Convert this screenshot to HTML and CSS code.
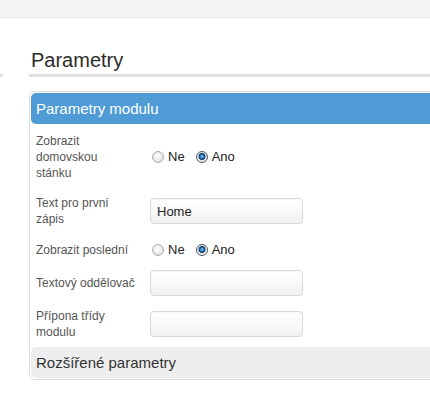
FILE: index.html
```html
<!DOCTYPE html>
<html lang="cs">
<head>
<meta charset="utf-8">
<title>Parametry</title>
<link rel="stylesheet" href="styles.css">
</head>
<body>
<div class="topbar"></div>
<div class="layout">
  <div class="side"><div class="side-rule"></div></div>
  <div class="content">
    <h2 class="heading">Parametry</h2>
    <div class="panel">
      <div class="panel-head">Parametry modulu</div>
      <div class="fields">
        <div class="row row-a">
          <div class="label">Zobrazit<br>domovskou<br>stánku</div>
          <div class="radios">
            <label class="opt"><input class="radio" type="radio" name="home">Ne</label>
            <label class="opt"><input class="radio" type="radio" name="home" checked>Ano</label>
          </div>
        </div>
        <div class="row row-b">
          <div class="label">Text pro první<br>zápis</div>
          <input class="text" type="text" value="Home">
        </div>
        <div class="row">
          <div class="label">Zobrazit poslední</div>
          <div class="radios">
            <label class="opt"><input class="radio" type="radio" name="last">Ne</label>
            <label class="opt"><input class="radio" type="radio" name="last" checked>Ano</label>
          </div>
        </div>
        <div class="row">
          <div class="label">Textový oddělovač</div>
          <input class="text" type="text" value="">
        </div>
        <div class="row">
          <div class="label">Přípona třídy<br>modulu</div>
          <input class="text" type="text" value="">
        </div>
      </div>
      <div class="panel-foot">Rozšířené parametry</div>
    </div>
  </div>
</div>
</body>
</html>
```
FILE: styles.css
```css
html, body {
  margin: 0;
  padding: 0;
}
body {
  width: 430px;
  height: 398px;
  overflow: hidden;
  background: #fff;
  font-family: "Liberation Sans", Arial, sans-serif;
  color: #333;
}
.topbar {
  height: 17px;
  background: #f4f4f4;
  border-bottom: 1px solid #e8e8e8;
}
.layout {
  display: flex;
  gap: 26px;
  padding-top: 30px;
}
.side {
  width: 3px;
  flex: none;
}
.side-rule {
  height: 26px;
  border-bottom: 3px solid #e2e2e2;
}
.content {
  flex: none;
  width: 430px;
}
.heading {
  margin: 0;
  padding: 0 0 2px 2px;
  font-size: 20px;
  line-height: 24px;
  font-weight: normal;
  color: #2b2b2b;
  border-bottom: 3px solid #e0e0e0;
}
.panel {
  margin-top: 14px;
  border: 1px solid #dedede;
  border-radius: 5px;
  padding: 1px;
}
.panel-head {
  height: 31px;
  line-height: 31px;
  padding-left: 5px;
  border-radius: 5px;
  background: #4e9bd6;
  color: #fff;
  font-size: 15px;
}
.fields {
  display: flex;
  flex-direction: column;
  gap: 12px;
  padding: 9px 0 7px 5px;
}
.row {
  display: flex;
  align-items: center;
}
.row-a {
  margin-bottom: 2px;
}
.row-b {
  margin-bottom: 3px;
}
.label {
  width: 114px;
  flex: none;
  font-size: 12px;
  line-height: 16px;
  color: #555;
  white-space: nowrap;
}
.radios {
  display: flex;
  align-items: center;
  gap: 9px;
}
.opt {
  display: flex;
  align-items: center;
  font-size: 13px;
  line-height: 16px;
  color: #222;
}
.radio {
  appearance: none;
  -webkit-appearance: none;
  width: 12px;
  height: 12px;
  margin: 0 4px 0 2px;
  border-radius: 50%;
  border: 1px solid #adadad;
  background: radial-gradient(circle at 45% 40%, #ffffff 0, #f0f0f0 40%, #d6d6d6 100%);
  box-sizing: border-box;
}
.radio:checked {
  border-color: #4d5a66;
  background: radial-gradient(circle at 50% 45%, #a8e0ff 0, #3a93d6 1.2px, #15528c 2.6px, #1d3f60 3.2px, #e6e6e6 3.8px, #f2f2f2 100%);
}
.text {
  width: 153px;
  height: 26px;
  box-sizing: border-box;
  margin: 0;
  padding: 0 6px;
  border: 1px solid #d9d9d9;
  border-radius: 4px;
  background: linear-gradient(to bottom, #ffffff 0, #f9f9f9 50%, #f1f1f1 100%);
  box-shadow: inset 0 1px 1px rgba(0, 0, 0, 0.03);
  font-family: "Liberation Sans", Arial, sans-serif;
  font-size: 13px;
  color: #222;
}
.panel-foot {
  height: 31px;
  line-height: 31px;
  padding-left: 5px;
  border-radius: 5px;
  background: #eeeeee;
  color: #333;
  font-size: 15px;
}
```
